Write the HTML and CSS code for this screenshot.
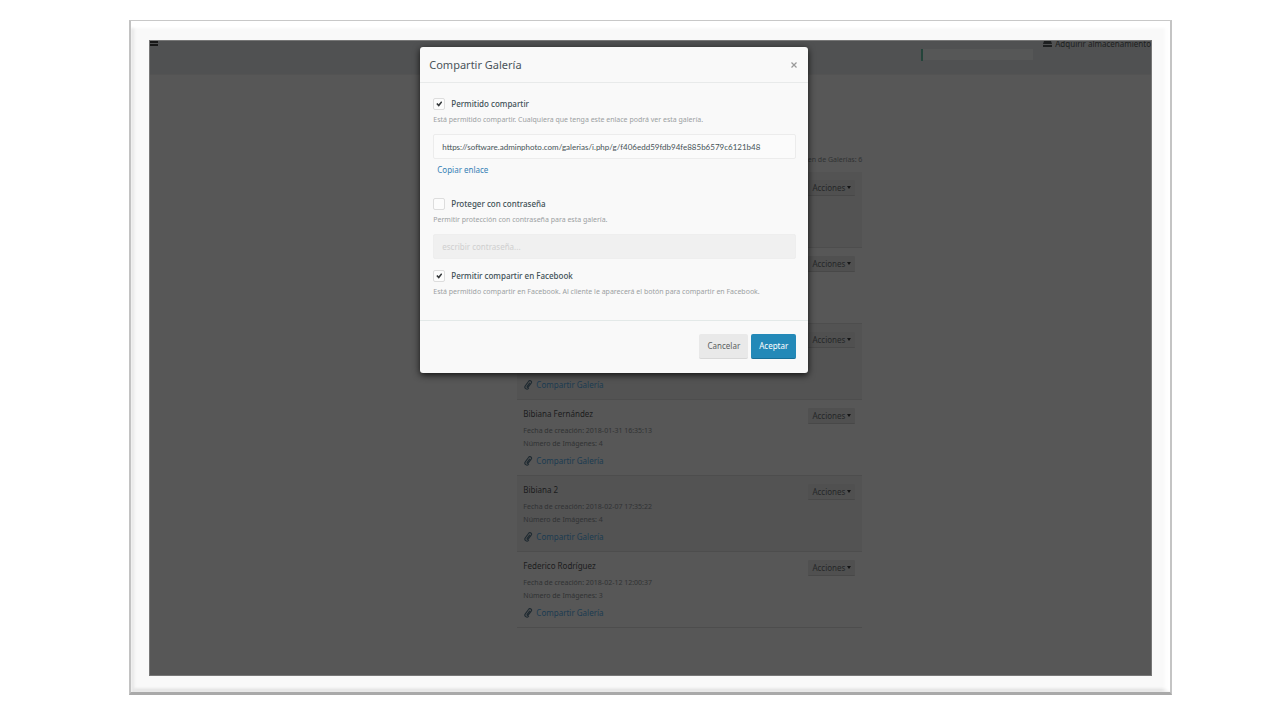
FILE: index.html
```html
<!DOCTYPE html>
<html lang="es">
<head>
<meta charset="utf-8">
<meta name="viewport" content="width=device-width, initial-scale=1">
<title>Compartir Galería</title>
<link rel="stylesheet" href="styles.css">
</head>
<body>
<svg class="sprite" aria-hidden="true">
  <symbol id="clip" viewBox="0 0 16 16">
    <path d="M10.500 5 6.700 10.200a1 1 0 0 0 1.600 1.200l4.800-6.400a2.500 2.500 0 0 0-4-3L3.700 9.300a3.200 3.200 0 0 0 5.200 3.900" fill="none" stroke="currentColor" stroke-width="1.800" stroke-linecap="round"/>
  </symbol>
</svg>
<div class="frame">
  <div class="screen">
    <header class="topbar">
      <button class="menu" aria-label="Menú"><span></span><span></span></button>
      <div class="quota"><div class="quota-used"></div></div>
      <a class="storage" href="#"><svg viewBox="0 0 9 7" aria-hidden="true"><path d="M1 0h7l1 3H0zM0 4h9v2H0z" fill="currentColor"/></svg>Adquirir almacenamiento</a>
    </header>
    <main class="galleries">
      <p class="total">en de Galerías: 6</p>
      <ul class="list">
        <li class="row shaded"><div></div><button class="actions">Acciones<i></i></button></li>
        <li class="row"><div></div><button class="actions">Acciones<i></i></button></li>
        <li class="row shaded"><div class="info"><a class="share" href="#"><svg aria-hidden="true"><use href="#clip"/></svg>Compartir Galería</a></div><button class="actions">Acciones<i></i></button></li>
        <li class="row"><div class="info"><h3>Bibiana Fernández</h3><p>Fecha de creación: 2018-01-31 16:35:13</p><p>Número de Imágenes: 4</p><a class="share" href="#"><svg aria-hidden="true"><use href="#clip"/></svg>Compartir Galería</a></div><button class="actions">Acciones<i></i></button></li>
        <li class="row shaded"><div class="info"><h3>Bibiana 2</h3><p>Fecha de creación: 2018-02-07 17:35:22</p><p>Número de Imágenes: 4</p><a class="share" href="#"><svg aria-hidden="true"><use href="#clip"/></svg>Compartir Galería</a></div><button class="actions">Acciones<i></i></button></li>
        <li class="row"><div class="info"><h3>Federico Rodríguez</h3><p>Fecha de creación: 2018-02-12 12:00:37</p><p>Número de Imágenes: 3</p><a class="share" href="#"><svg aria-hidden="true"><use href="#clip"/></svg>Compartir Galería</a></div><button class="actions">Acciones<i></i></button></li>
      </ul>
    </main>
    <form class="modal" role="dialog" aria-labelledby="dialog-title">
      <div class="modal-head">
        <h2 id="dialog-title">Compartir Galería</h2>
        <button class="close" type="button" aria-label="Cerrar"><svg viewBox="0 0 6 6" aria-hidden="true"><path d="M.5.5l5 5M5.500.500l-5 5" stroke="currentColor" stroke-width="1.200"/></svg></button>
      </div>
      <div class="modal-body">
        <section class="link-section">
          <label class="option"><input type="checkbox" checked>Permitido compartir</label>
          <p class="hint">Está permitido compartir. Cualquiera que tenga este enlace podrá ver esta galería.</p>
          <input class="field" type="text" aria-label="Enlace" value="https://software.adminphoto.com/galerias/i.php/g/f406edd59fdb94fe885b6579c6121b48" readonly>
          <a class="copy" href="#">Copiar enlace</a>
        </section>
        <section class="password-section">
          <label class="option"><input type="checkbox">Proteger con contraseña</label>
          <p class="hint">Permitir protección con contraseña para esta galería.</p>
          <input class="field" type="text" aria-label="Contraseña" placeholder="escribir contraseña..." disabled>
        </section>
        <section>
          <label class="option"><input type="checkbox" checked>Permitir compartir en Facebook</label>
          <p class="hint">Está permitido compartir en Facebook. Al cliente le aparecerá el botón para compartir en Facebook.</p>
        </section>
      </div>
      <div class="modal-foot">
        <button class="btn" type="button">Cancelar</button>
        <button class="btn primary" type="submit">Aceptar</button>
      </div>
    </form>
  </div>
</div>
</body>
</html>
```

FILE: styles.css
```css
* { box-sizing: border-box; }

body {
  margin: 0;
  padding: 20px 108px 25px 129px;
  background: #fff;
  color: #4a5459;
  font-family: "Noto Sans", "Open Sans", sans-serif;
  font-size: 8px;
  line-height: 12px;
}

h2, h3, p, ul { margin: 0; padding: 0; }
h2, h3 { font-weight: 400; }
a { color: #3580b5; text-decoration: none; }
button, input { margin: 0; font: inherit; }
.sprite { display: none; }

.frame {
  padding: 19px 18px 16px 18px;
  background: #f9f9f9;
  border-style: solid;
  border-width: 1px 2px 3px 2px;
  border-color: #c8c8c8 #c4c4c4 #a9a9a9 #c2c2c2;
  box-shadow: inset 0 7px 3px #fff, inset 3px 0 3px #e6e6e6, inset -5px 0 4px #fff, inset 0 -3px 3px #dadada;
}

.screen {
  position: relative;
  min-height: calc(100vh - 84px);
  overflow: hidden;
  background: #575757;
  border: 1px solid #777;
}

.topbar {
  display: flex;
  height: 34px;
  background: #505152;
  border-bottom: 1px solid #535353;
}

.menu {
  display: grid;
  gap: 1px;
  align-content: start;
  width: 8px;
  padding: 0;
  border: 0;
  background: none;
}
.menu span { height: 2px; background: #171717; }

.quota {
  width: 112px;
  height: 11px;
  margin: 8px 10px 0 auto;
  background: #565757;
}
.quota-used { width: 2px; height: 12px; background: #24443a; }

.storage {
  display: flex;
  align-items: center;
  gap: 3px;
  height: 6px;
  line-height: 6px;
  white-space: nowrap;
  color: #1d1f20;
}
.storage svg { width: 9px; height: 7px; }

.galleries {
  width: 345px;
  margin: 78px 0 44px 36.700%;
  color: #303233;
}
.total { text-align: right; line-height: 14px; font-size: 7px; padding-bottom: 5px; }
.list { list-style: none; }

.row {
  display: flex;
  justify-content: space-between;
  align-items: flex-start;
  min-height: 76px;
  padding: 8px 7px 8px 6px;
  border-bottom: 1px solid #4d4d4d;
}
.row.shaded { background: #535353; }
.row h3 { font-size: 8px; line-height: 12px; margin-bottom: 4px; color: #1b1c1d; }
.row p { font-size: 7px; line-height: 13px; }
.info { align-self: flex-end; }
.share {
  display: flex;
  align-items: center;
  gap: 3px;
  margin-top: 5px;
  color: #1b3b51;
}
.share svg { width: 10px; height: 10px; color: #202b32; }

.actions {
  display: flex;
  align-items: center;
  gap: 2px;
  height: 16px;
  padding: 0 4px;
  border: 0;
  border-bottom: 1px solid #484848;
  border-radius: 1px;
  background: #505050;
  color: #252728;
}
.actions i { border: 2px solid transparent; border-top: 3px solid #151515; border-bottom: 0; }

.modal {
  position: absolute;
  top: 6px;
  left: 27%;
  width: 388px;
  background: #f9f9f9;
  border-radius: 3px;
  box-shadow: 0 2px 7px rgba(0, 0, 0, .8);
}

.modal-head {
  display: flex;
  align-items: center;
  justify-content: space-between;
  height: 36px;
  padding: 0 9px;
  border-bottom: 1px solid #e8eaea;
}
.modal-head h2 { font-size: 11px; line-height: 16px; }
.close { width: 8px; height: 16px; padding: 0; border: 0; background: none; color: #999; }
.close svg { display: block; width: 6px; height: 6px; }

.modal-body { padding: 15px 12px 22px 13px; }
.link-section { padding-bottom: 22px; }
.password-section { padding-bottom: 11px; }

.option {
  display: flex;
  align-items: center;
  gap: 6px;
  height: 12px;
  font-weight: 500;
  color: #405056;
}
.option input {
  display: grid;
  place-items: center;
  appearance: none;
  width: 12px;
  height: 12px;
  border: 1px solid #ddd;
  border-radius: 2px;
  background: #fcfcfc;
}
.option input:checked::before {
  content: "";
  width: 6px;
  height: 6px;
  background: #34383a;
  clip-path: polygon(0 50%, 20% 32%, 40% 55%, 82% 5%, 100% 22%, 42% 96%);
}
.hint { margin-top: 4px; font-size: 7px; line-height: 12px; color: #9ba0a2; }

.field {
  display: block;
  width: 100%;
  height: 25px;
  margin-top: 8px;
  padding: 0 8px;
  border: 1px solid #ececec;
  border-radius: 2px;
  background: #fbfbfb;
  font-family: Lato, "Noto Sans", sans-serif;
  color: #465357;
}
.field:disabled { background: #f0f0f0; border-color: #eee; font-family: inherit; }
.field::placeholder { color: #cfcfcf; opacity: 1; }
.copy { display: block; width: fit-content; margin: 5px 0 0 4px; }

.modal-foot {
  display: flex;
  justify-content: flex-end;
  gap: 3px;
  padding: 13px 12px 14px;
  border-top: 1px solid #e3e9e8;
}
.btn {
  height: 25px;
  padding: 0 8px;
  border: 0;
  border-bottom: 1px solid #d8d8d8;
  border-radius: 2px;
  background: #e9e9e9;
  color: #5b5f61;
}
.btn.primary { background: #2389b8; border-color: #176f98; color: #fff; }
```
